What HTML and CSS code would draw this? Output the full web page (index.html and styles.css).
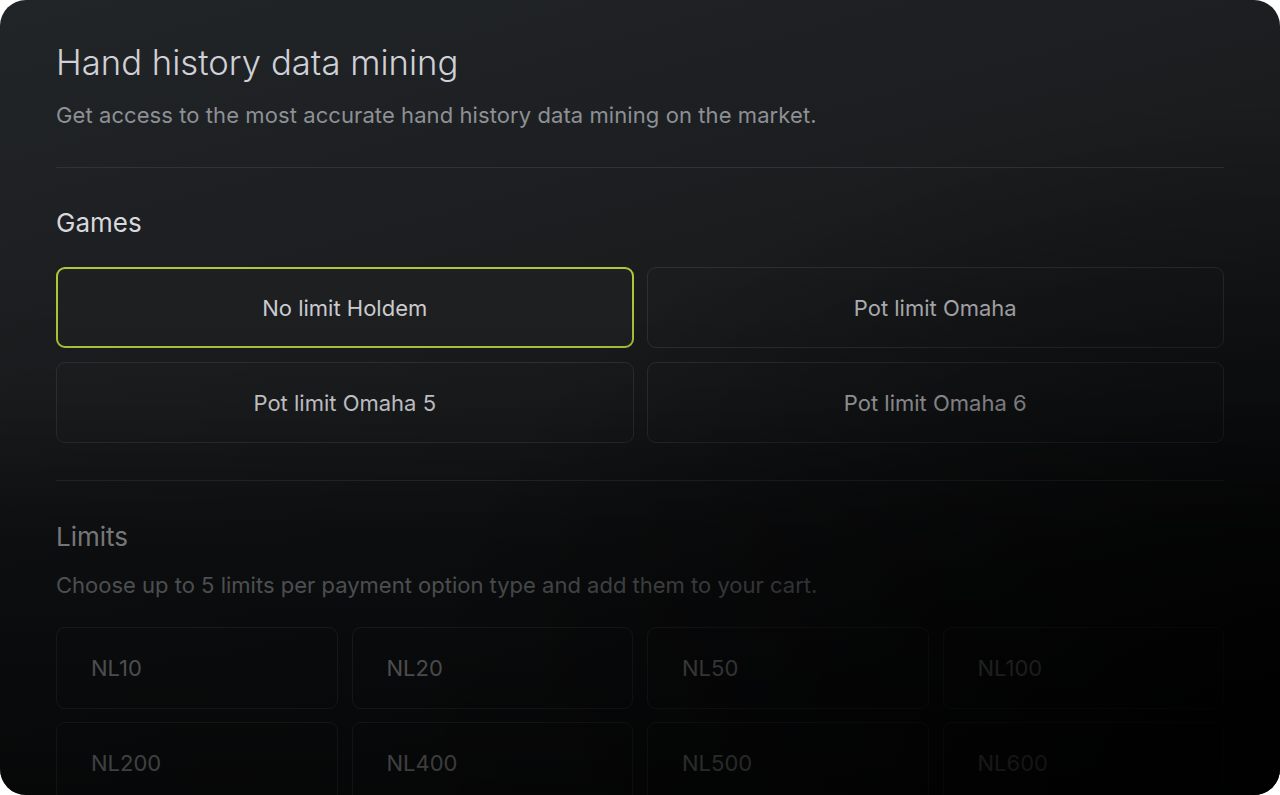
FILE: index.html
```html
<!DOCTYPE html>
<html lang="en">
<head>
<meta charset="utf-8">
<title>Hand history data mining</title>
<link rel="stylesheet" href="styles.css">
</head>
<body>
<div class="panel">
  <header class="head">
    <h1 class="title">Hand history data mining</h1>
    <p class="subtitle">Get access to the most accurate hand history data mining on the market.</p>
  </header>
  <hr class="divider">
  <section class="section">
    <h2 class="section-title">Games</h2>
    <div class="games">
      <button class="game game-selected">No limit Holdem</button>
      <button class="game">Pot limit Omaha</button>
      <button class="game">Pot limit Omaha 5</button>
      <button class="game">Pot limit Omaha 6</button>
    </div>
  </section>
  <hr class="divider">
  <section class="section section-limits">
    <h2 class="section-title">Limits</h2>
    <p class="section-desc">Choose up to 5 limits per payment option type and add them to your cart.</p>
    <div class="limits">
      <button class="limit">NL10</button>
      <button class="limit">NL20</button>
      <button class="limit">NL50</button>
      <button class="limit">NL100</button>
      <button class="limit">NL200</button>
      <button class="limit">NL400</button>
      <button class="limit">NL500</button>
      <button class="limit">NL600</button>
    </div>
  </section>
</div>
</body>
</html>
```

FILE: styles.css
```css
* { box-sizing: border-box; }
html, body { margin: 0; padding: 0; background: #ffffff; }
body { font-family: Inter, "Noto Sans", "Liberation Sans", sans-serif; }

.panel {
  position: relative;
  width: 1280px;
  height: 795px;
  overflow: hidden;
  border-radius: 26px;
  background: linear-gradient(165deg, #222528 0%, #1a1c1e 40%, #131517 70%, #0c0d0e 100%);
  padding: 40px 56px 0;
}
.panel::after {
  content: "";
  position: absolute;
  inset: 0;
  pointer-events: none;
  background:
    radial-gradient(900px 700px at 100% 100%, rgba(0,0,0,0.95) 0%, rgba(0,0,0,0) 100%),
    linear-gradient(to bottom, rgba(0,0,0,0) 30%, rgba(0,0,0,0.1) 50%, rgba(0,0,0,0.45) 67%, rgba(0,0,0,0.55) 84%, rgba(0,0,0,0.65) 100%);
}

.title {
  margin: 0;
  font-size: 34.7px;
  line-height: 44px;
  font-weight: 360;
  color: #d0d0d7;
}
.subtitle {
  margin: 17px 0 0;
  font-size: 22px;
  line-height: 28px;
  letter-spacing: 0.08px;
  color: #8d9095;
}
.divider {
  margin: 0;
  border: 0;
  height: 1px;
  background: #303336;
}
.head { padding-bottom: 38px; }
.section { padding-top: 38px; padding-bottom: 37px; }
.section-limits { padding-top: 39px; }
.section-title {
  margin: 0;
  font-size: 26px;
  line-height: 34px;
  font-weight: 400;
  color: #d8d8dc;
}
.section-desc {
  margin: 17px 0 0;
  font-size: 22px;
  line-height: 28px;
  color: #95989d;
}
.games {
  margin-top: 27px;
  display: grid;
  grid-template-columns: 1fr 1fr;
  gap: 14px 13px;
}
.game {
  height: 81px;
  border: 1px solid #2f3234;
  border-radius: 9px;
  background: rgba(255,255,255,0.008);
  font-family: inherit;
  font-size: 22px;
  font-weight: 400;
  color: #d4d4d9;
}
.game-selected {
  border: 2px solid #b0cd3c;
  background: #1e2022;
}
.limits {
  margin-top: 28px;
  display: grid;
  grid-template-columns: repeat(4, 1fr);
  gap: 13px 14px;
}
.limit {
  height: 82px;
  border: 1px solid #303335;
  border-radius: 9px;
  background: transparent;
  text-align: left;
  padding: 0 34px;
  font-family: inherit;
  font-size: 22px;
  font-weight: 400;
  color: #a8aaae;
}
```
